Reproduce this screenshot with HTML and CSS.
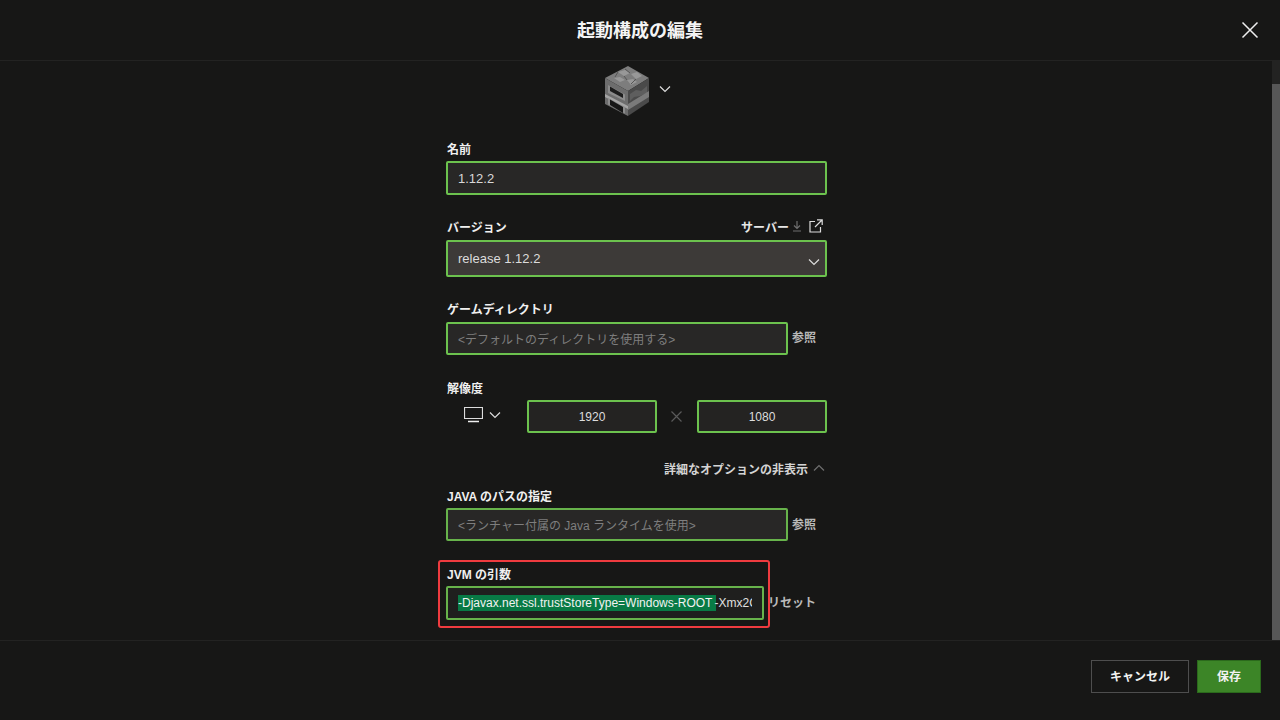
FILE: index.html
```html
<!DOCTYPE html>
<html lang="ja">
<head>
<meta charset="utf-8">
<title>起動構成の編集</title>
<link rel="stylesheet" href="styles.css">
</head>
<body>
<div class="dialog">
  <header class="top">
    <h1 class="title">起動構成の編集</h1>
    <button class="close" aria-label="閉じる">
      <svg width="18" height="18" viewBox="0 0 18 18"><path d="M1.5 1.5l15 15M16.5 1.5l-15 15" class="stroke-light"/></svg>
    </button>
  </header>
  <div class="middle">
    <main class="content">
      <div class="icon-row">
        <svg class="furnace" width="44" height="50" viewBox="0 0 44 50">
          <polygon points="23,0 44,12 23,25 0,12" fill="#7d7d7d"/>
          <path d="M13 6l7-2 5 3-6 3zM26 8l6-2 5 4-6 3zM9 12l6-1 5 3-5 2zM22 14l6-1 4 3-6 3z" fill="#989898"/>
          <path d="M20 3l5 4M13 6l-3 5M31 13l-5 5M19 10l3 4" stroke="#565656" stroke-width="1" fill="none"/>
          <polygon points="0,12 23,25 23,50 0,38" fill="#6d6d6d"/>
          <polygon points="44,12 23,25 23,50 44,36" fill="#4a4a4a"/>
          <path d="M25 28l6-4 5 1 6-5v7l-7 3-6 1-4 4z" fill="#5e5e5e"/>
          <polygon points="23,38 44,25 44,31 23,44" fill="#7a7a7a"/>
          <polygon points="3,19 20,28.500 20,35 3,27" fill="#8c8c8c"/>
          <polygon points="5,20.500 18,28 18,32 5,25" fill="#1c1c1c"/>
          <polygon points="0,28 23,40 23,43 0,31" fill="#a4a4a4"/>
          <polygon points="3,32 20,41 20,47.500 3,38.500" fill="#8c8c8c"/>
          <polygon points="5,33.500 18,41 18,47 5,39" fill="#161616"/>
        </svg>
        <svg class="chev-icon" width="12" height="8" viewBox="0 0 12 8"><path d="M1 1.500l5 5 5-5" class="stroke-light"/></svg>
      </div>

      <section class="field f-name">
        <div class="label-row"><label class="label">名前</label></div>
        <div class="input"><span class="value">1.12.2</span></div>
      </section>

      <section class="field f-version">
        <div class="label-row">
          <label class="label">バージョン</label>
          <span class="server">サーバー
            <svg width="10" height="12" viewBox="0 0 10 12"><path d="M5 1v7M2 5.500L5 8.500l3-3M1 11h8" class="stroke-dim"/></svg>
            <svg class="ext" width="14" height="14" viewBox="0 0 14 14"><path d="M6 2.500H1v10.500h10.500V8M8 .800h5.200V6M13 1L6 8" class="stroke-light"/></svg>
          </span>
        </div>
        <div class="input select"><span class="value">release 1.12.2</span>
          <svg width="12" height="8" viewBox="0 0 12 8"><path d="M1 1.500l5 5 5-5" class="stroke-light"/></svg>
        </div>
      </section>

      <section class="field f-dir">
        <div class="label-row"><label class="label">ゲームディレクトリ</label></div>
        <div class="with-action">
          <div class="input grow"><span class="placeholder">&lt;デフォルトのディレクトリを使用する&gt;</span></div>
          <span class="action">参照</span>
        </div>
      </section>

      <section class="field f-res">
        <div class="label-row"><label class="label">解像度</label></div>
        <div class="res-row">
          <div class="monitor">
            <svg width="19" height="16" viewBox="0 0 19 16"><path d="M.5.500h18v11H.5z" class="stroke-light"/><path d="M4 14.500h11" class="stroke-white"/></svg>
            <svg class="mon-chev" width="12" height="8" viewBox="0 0 12 8"><path d="M1 1.500l5 5 5-5" class="stroke-light"/></svg>
          </div>
          <div class="input num">1920</div>
          <svg class="times" width="11" height="11" viewBox="0 0 11 11"><path d="M.5.500l10 10M10.500.500l-10 10" class="stroke-dim"/></svg>
          <div class="input num">1080</div>
        </div>
      </section>

      <div class="toggle">詳細なオプションの非表示
        <svg width="12" height="8" viewBox="0 0 12 8"><path d="M1 6.500l5-5 5 5" class="stroke-dim"/></svg>
      </div>

      <section class="field f-java">
        <div class="label-row"><label class="label">JAVA のパスの指定</label></div>
        <div class="with-action">
          <div class="input grow"><span class="placeholder">&lt;ランチャー付属の Java ランタイムを使用&gt;</span></div>
          <span class="action">参照</span>
        </div>
      </section>

      <section class="field f-jvm">
        <div class="label-row"><label class="label">JVM の引数</label></div>
        <div class="with-action">
          <div class="input jvm"><span class="jvm-text"><span class="selected">-Djavax.net.ssl.trustStoreType=Windows-ROOT </span>-Xmx2G</span></div>
          <span class="action reset">リセット</span>
        </div>
        <div class="highlight"></div>
      </section>
    </main>
    <div class="scrollbar"><div class="thumb"></div></div>
  </div>
  <footer class="bottom">
    <button class="btn cancel">キャンセル</button>
    <button class="btn save">保存</button>
  </footer>
</div>
</body>
</html>
```
FILE: styles.css
```css
* { box-sizing: border-box; }
html, body { margin: 0; height: 100%; }
body {
  background: #171716;
  color: #f0f0f0;
  font-family: "Liberation Sans", "Noto Sans CJK JP", sans-serif;
  overflow: hidden;
}
.dialog { width: 1280px; height: 720px; display: flex; flex-direction: column; }
.top {
  height: 61px; flex: none;
  border-bottom: 1px solid #232322;
  display: flex; align-items: center; justify-content: center;
  padding-bottom: 3px;
  position: relative;
}
.title { margin: 0; font-size: 18px; font-weight: 700; color: #f4f4f4; }
.close {
  position: absolute; right: 21px; top: 21px;
  width: 18px; height: 18px; padding: 0;
  background: none; border: 0; display: flex;
}
.stroke-light { fill: none; stroke: #dcdcdc; stroke-width: 1.2; }
.stroke-white { fill: none; stroke: #f0f0f0; stroke-width: 1.5; }
.stroke-dim { fill: none; stroke: #6f6f6f; stroke-width: 1.2; }
.close .stroke-light { stroke: #eeeeee; stroke-width: 1.5; }

.middle { flex: 1; display: flex; min-height: 0; }
.content {
  flex: 1; min-width: 0;
  padding: 4px 0 0 1px;
  display: flex; flex-direction: column; align-items: center;
}
.icon-row { width: 381px; height: 52px; display: flex; align-items: center; justify-content: center; gap: 10px; padding-left: 3px; }
.furnace { filter: blur(0.6px); }
.chev-icon { margin-top: -4px; }

.field { width: 381px; position: relative; }
.label-row { display: flex; justify-content: space-between; align-items: center; height: 18px; padding: 0 0 2px 1px; }
.label { font-size: 12px; font-weight: 700; color: #f0f0f0; }
.server { display: flex; align-items: center; font-size: 12px; font-weight: 700; color: #e6e6e6; padding-right: 4px; }
.server svg { margin-left: 3px; }
.server .ext { margin-left: 7px; }

.input {
  height: 34px;
  background: #282726;
  border: 2px solid #6cc24e;
  border-radius: 2px;
  display: flex; align-items: center;
  padding: 0 10px;
  font-size: 13px;
}
.grow { flex: 1; }
.value { color: #d8d8d8; }
.placeholder { color: #7e7e7e; font-size: 12px; }
.select { background: #3d3a38; justify-content: space-between; padding-right: 5px; }
.select .value { color: #dcdcdc; }
.select svg { margin-top: 6px; }
.with-action { display: flex; align-items: center; }
.action { width: 39px; flex: none; text-align: right; padding-right: 11px; font-size: 12px; font-weight: 700; color: #b9b9b9; white-space: nowrap; }

.f-name { margin-top: 23px; }
.f-name .input { margin-top: 3px; }
.f-version { margin-top: 23px; }
.f-version .input { margin-top: 4px; height: 37px; }
.f-dir { margin-top: 23px; }
.f-dir .input { margin-top: 4px; height: 33px; }
.f-res { margin-top: 24px; }
.f-res .label-row { height: 17px; padding-bottom: 0; }
.res-row { margin-top: 4px; display: flex; align-items: center; }
.monitor { width: 81px; flex: none; display: flex; align-items: center; gap: 6px; padding-left: 18px; margin-bottom: 3px; }
.num { width: 130px; height: 33px; flex: none; justify-content: center; font-size: 12px; color: #dddddd; background: #242322; padding: 0; }
.times { margin: 0 15px 0 14px; flex: none; }
.times .stroke-dim { stroke: #5a5a5a; }
.toggle {
  width: 381px; margin-top: 26px; height: 18px;
  display: flex; align-items: center; justify-content: flex-end;
  gap: 5px; padding-right: 2px;
  font-size: 12px; font-weight: 700; color: #d4d4d4;
}
.f-java { margin-top: 10px; }
.f-java .input { margin-top: 3px; height: 33px; border-color: #67b34b; }
.f-jvm { margin-top: 24px; }
.f-jvm .input { margin-top: 3px; }
.jvm {
  width: 318px; flex: none; overflow: hidden; white-space: nowrap;
  font-size: 12px; color: #e0e0e0; background: #1f1f1e; border-color: #67b34b;
}
.jvm-text { display: block; width: 100%; overflow: hidden; }
.selected { background: #087a45; color: #f2f2f2; display: inline-block; height: 16px; line-height: 16px; white-space: pre; margin-right: -1px; }
.reset { width: 63px; padding: 0 11px 0 0; text-align: right; }
.highlight {
  position: absolute; left: -8px; top: -5px; width: 332px; height: 68px;
  border: 2px solid #ef3b3f; border-radius: 3px; pointer-events: none;
}

.scrollbar { width: 8px; flex: none; background: #232322; padding-top: 23px; }
.thumb { height: 100%; background: #575757; }

.bottom {
  height: 80px; flex: none;
  border-top: 1px solid #232322;
  display: flex; justify-content: flex-end; align-items: flex-start;
  gap: 8px; padding: 19px 19px 0 0;
}
.btn {
  height: 33px; font: 700 12px "Liberation Sans", "Noto Sans CJK JP", sans-serif;
  color: #f2f2f2; border-radius: 0; padding: 0 0 2px;
}
.cancel { width: 98px; background: transparent; border: 1px solid #4e4e4e; }
.save { width: 64px; background: #3c8527; border: 1px solid #2b6a1c; }
```
